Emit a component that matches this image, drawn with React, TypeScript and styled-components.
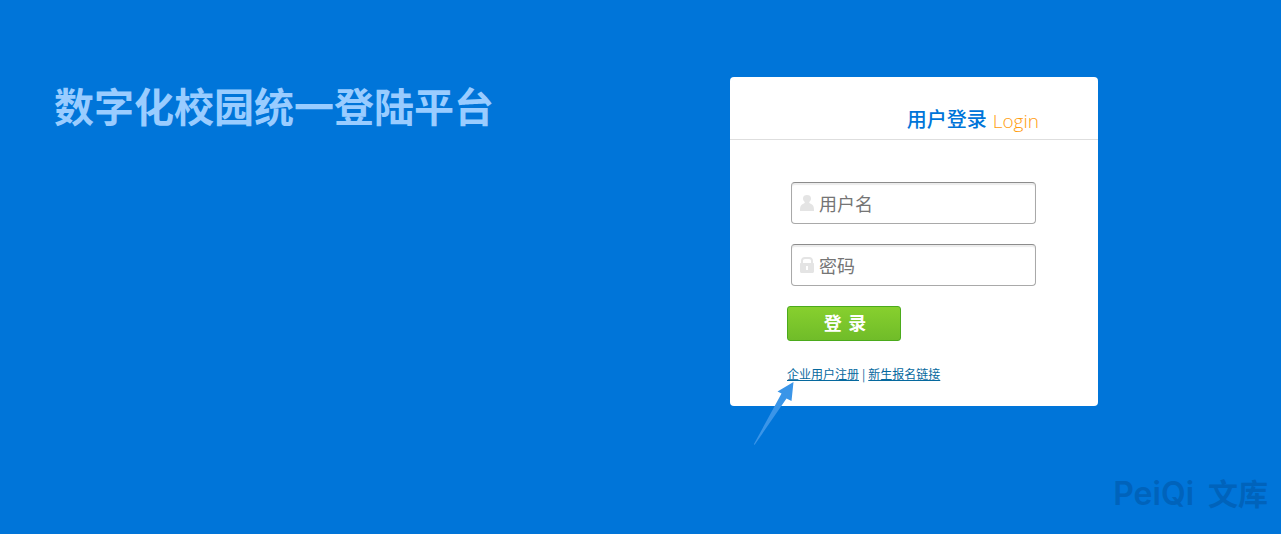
import React from "react";
import styled, { createGlobalStyle } from "styled-components";

const GlobalStyle = createGlobalStyle`
  * { box-sizing: border-box; }
  body {
    margin: 0;
    background: #0075d9;
    font-family: "Liberation Sans", "Noto Sans CJK SC", sans-serif;
  }
`;

const Page = styled.div`
  position: relative;
  display: flex;
  flex-direction: column;
  min-height: 100vh;
`;

const Main = styled.main`
  display: flex;
  flex-wrap: wrap;
  justify-content: space-between;
  align-items: flex-start;
  gap: 32px;
  padding: 77px 183px 0 54px;
`;

const SiteTitle = styled.h1`
  margin: 0;
  color: #99ccff;
  font-family: "Noto Sans CJK SC", sans-serif;
  font-size: 40px;
  font-weight: 700;
  line-height: 56px;
`;

const Card = styled.section`
  width: 368px;
  padding-bottom: 22px;
  background: #fff;
  border-radius: 4px;
`;

const CardHeader = styled.header`
  display: flex;
  justify-content: flex-end;
  align-items: flex-end;
  gap: 6px;
  height: 63px;
  padding: 0 59px 2px 0;
  border-bottom: 1px solid #dedede;
`;

const CardTitle = styled.h2`
  margin: 0;
  color: #0075d9;
  font-family: "Noto Sans CJK SC", sans-serif;
  font-size: 20px;
  font-weight: 500;
  line-height: 36px;
`;

const CardSubtitle = styled.span`
  color: #ff9c0d;
  font-family: "Open Sans", sans-serif;
  font-size: 19px;
  font-weight: 300;
  line-height: 32px;
`;

const Form = styled.form`
  display: flex;
  flex-direction: column;
  align-items: flex-start;
  gap: 20px;
  padding: 42px 57px 0;
`;

const Field = styled.label`
  display: flex;
  align-items: center;
  gap: 4px;
  width: 245px;
  height: 42px;
  margin-left: 4px;
  padding: 0 8px;
  background: #fff;
  border: 1px solid #a9a9a9;
  border-top-color: #8c8c8c;
  border-radius: 4px;
  box-shadow: inset 0 2px 1px #ececec;
`;

const FieldIcon = styled.svg`
  flex: none;
  width: 15px;
  height: 16px;
  fill: #e4e4e4;
`;

const FieldInput = styled.input`
  flex: 1;
  min-width: 0;
  height: 32px;
  padding: 0;
  border: 0;
  outline: 0;
  background: transparent;
  color: #333;
  font-family: "Noto Sans CJK SC", sans-serif;
  font-size: 18px;
  &::placeholder {
    color: #757575;
    opacity: 1;
  }
`;

const SubmitButton = styled.button`
  width: 114px;
  height: 35px;
  padding: 0 0 0 2px;
  border: 1px solid #4bab1c;
  border-radius: 3px;
  background: linear-gradient(#87d02e, #70bc29);
  color: #fff;
  font-family: "DejaVu Sans", "Noto Sans CJK SC", sans-serif;
  font-size: 18px;
  font-weight: 700;
  line-height: 32px;
`;

const Links = styled.nav`
  display: flex;
  gap: 3px;
  margin-top: 3px;
  color: #06699e;
  font-family: "Noto Sans CJK SC", sans-serif;
  font-size: 12px;
  line-height: 20px;
`;

const TextLink = styled.a`
  color: #06699e;
  text-decoration: underline;
`;

const Pointer = styled.svg`
  position: absolute;
  left: -34px;
  top: 17px;
  width: 42px;
  height: 65px;
  pointer-events: none;
`;

const LinkAnchor = styled.span`
  position: relative;
`;

const Watermark = styled.footer`
  display: flex;
  justify-content: flex-end;
  align-items: baseline;
  gap: 14px;
  margin-top: auto;
  padding: 0 13px 16px;
  color: #0063bb;
  font-family: Inter, "Noto Sans CJK SC", sans-serif;
  font-size: 30px;
  line-height: 48px;
`;

const WatermarkName = styled.span`
  font-size: 32px;
  font-weight: 600;
`;

const WatermarkHan = styled.span`
  font-family: "Noto Sans CJK SC", sans-serif;
  font-weight: 700;
`;

export default function App() {
  return (
    <Page>
      <GlobalStyle />
      <Main>
        <SiteTitle>数字化校园统一登陆平台</SiteTitle>
        <Card>
          <CardHeader>
            <CardTitle>用户登录</CardTitle>
            <CardSubtitle>Login</CardSubtitle>
          </CardHeader>
          <Form onSubmit={(e) => e.preventDefault()}>
            <Field>
              <FieldIcon viewBox="0 0 15 16" aria-hidden="true">
                <path d="M7 0C9.300 0 11 1 11 3.600C11 5.300 10.200 6.200 9.300 7V8L12 9.400C13.600 10.400 14 12 14 16H0C0 12 .4 10.400 2 9.400L4.700 8V7C3.800 6.200 3 5.300 3 3.600C3 1 4.700 0 7 0Z" />
              </FieldIcon>
              <FieldInput type="text" aria-label="用户名" placeholder="用户名" />
            </Field>
            <Field>
              <FieldIcon viewBox="0 0 15 16" aria-hidden="true">
                <path
                  fillRule="evenodd"
                  d="M1 6V4C1 1.500 2.500 0 4.800 0H9.200C11.500 0 13 1.500 13 4V6C13.700 6 14 6.400 14 7V14.200C14 15.400 13.400 16 12.200 16H1.800C.6 16 0 15.400 0 14.200V7C0 6.400 .3 6 1 6ZM3 6H11V4C11 2.700 10.300 2 9 2H5C3.700 2 3 2.700 3 4ZM6 9V13H8V9Z"
                />
              </FieldIcon>
              <FieldInput type="password" aria-label="密码" placeholder="密码" />
            </Field>
            <SubmitButton type="submit">登 录</SubmitButton>
            <Links>
              <LinkAnchor>
                <TextLink href="#company">企业用户注册</TextLink>
                <Pointer viewBox="0 0 42 65" aria-hidden="true">
                  <path
                    d="M40.500 1L38.500 20L33.500 17.500L1.500 64L1 63L28.500 12.500L24.500 10.500Z"
                    fill="#3a95e8"
                  />
                </Pointer>
              </LinkAnchor>
              <span>|</span>
              <TextLink href="#freshman">新生报名链接</TextLink>
            </Links>
          </Form>
        </Card>
      </Main>
      <Watermark>
        <WatermarkName>PeiQi</WatermarkName>
        <WatermarkHan>文库</WatermarkHan>
      </Watermark>
    </Page>
  );
}
